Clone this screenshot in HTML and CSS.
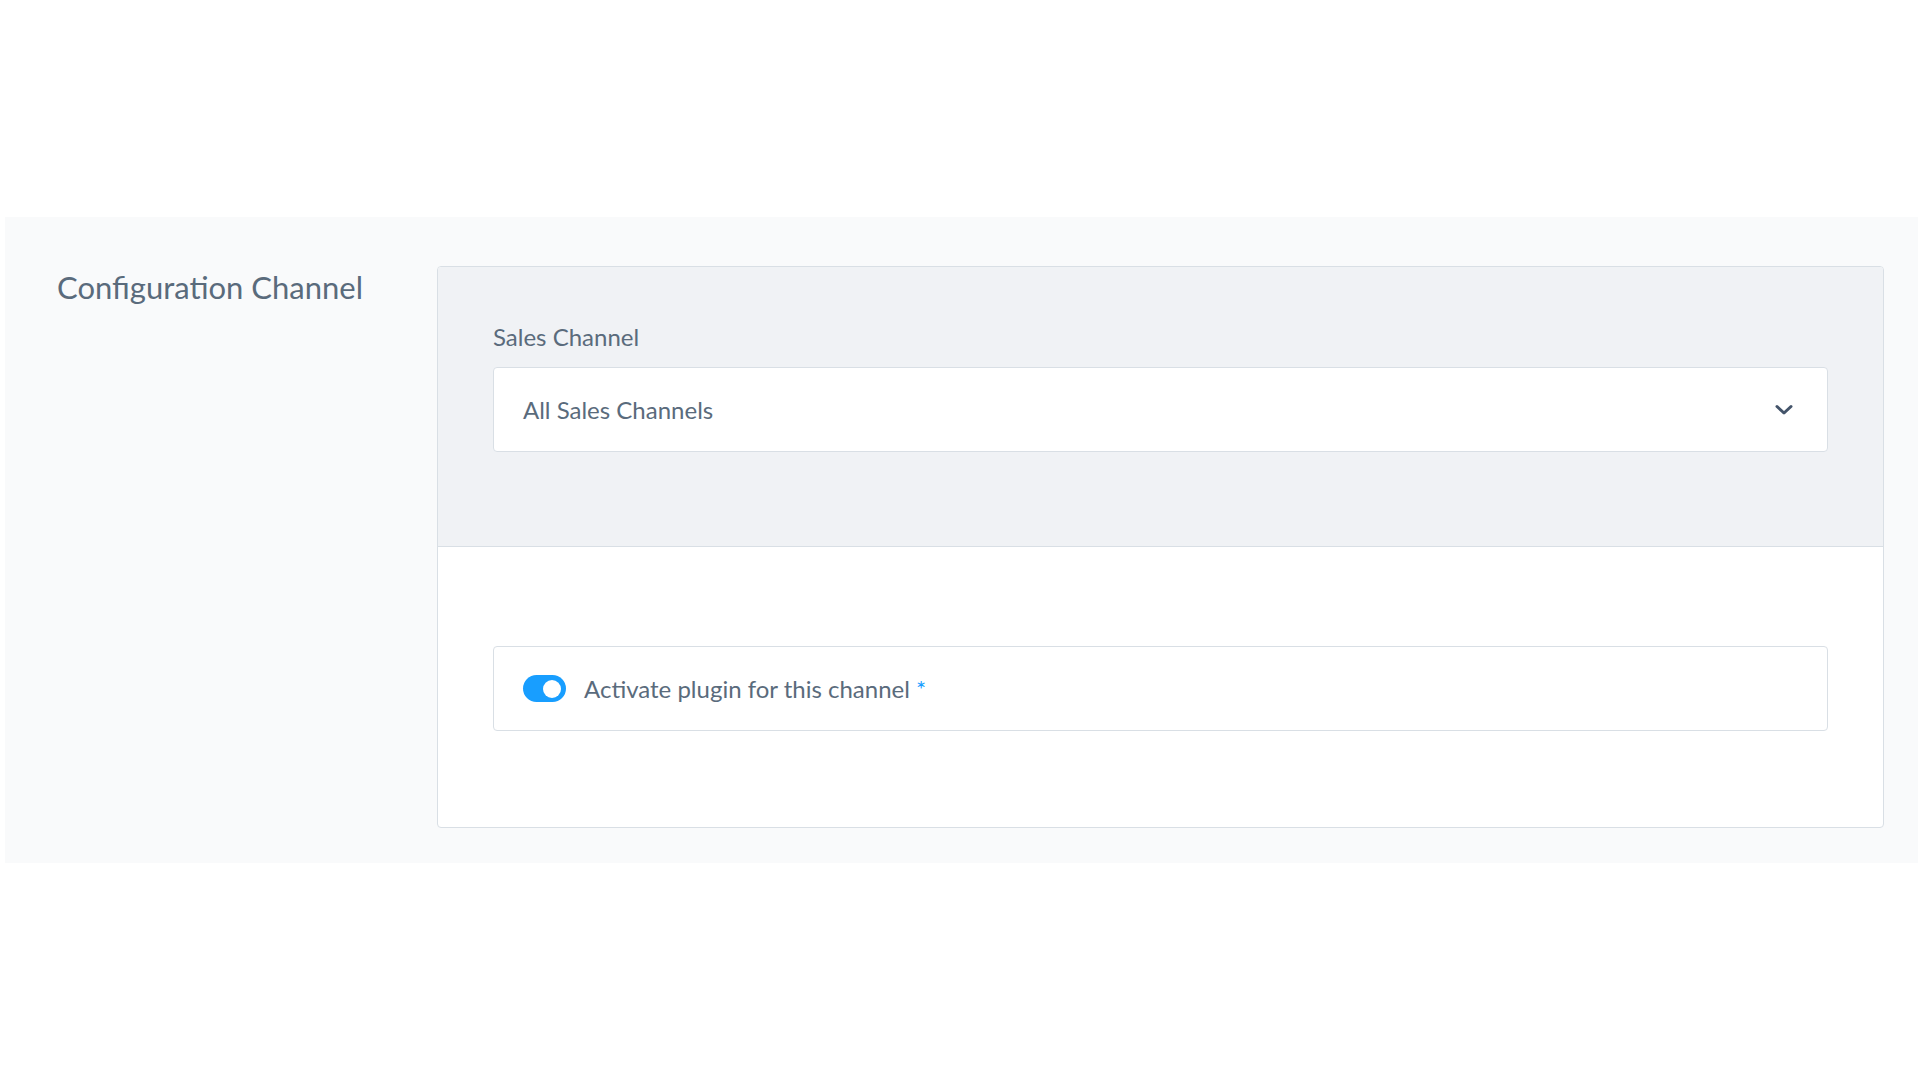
FILE: index.html
```html
<!DOCTYPE html>
<html lang="en">
<head>
<meta charset="utf-8">
<title>Configuration Channel</title>
<link rel="stylesheet" href="styles.css">
</head>
<body>
<div class="page">
  <section class="config">
    <div class="config-side">
      <h2 class="config-title">Configuration Channel</h2>
    </div>
    <div class="card">
      <div class="card-header">
        <label class="field-label">Sales Channel</label>
        <div class="select">
          <span class="select-value">All Sales Channels</span>
          <svg class="chevron" width="18" height="12" viewBox="0 0 18 12" aria-hidden="true">
            <path d="M2 2.5 L9 9 L16 2.5" fill="none" stroke="#44546a" stroke-width="3" stroke-linecap="round" stroke-linejoin="round"/>
          </svg>
        </div>
      </div>
      <div class="card-body">
        <div class="switch-field">
          <span class="switch"><span class="switch-knob"></span></span>
          <span class="switch-label">Activate plugin for this channel <span class="required">*</span></span>
        </div>
      </div>
    </div>
  </section>
</div>
</body>
</html>
```
FILE: styles.css
```css
html, body {
  margin: 0;
  padding: 0;
  background: #ffffff;
}

body {
  font-family: "Lato", "Liberation Sans", sans-serif;
  color: #5a6b7c;
}

.page {
  padding-top: 217px;
  padding-left: 5px;
  width: 1913px;
}

.config {
  display: grid;
  grid-template-columns: 432px 1fr;
  height: 646px;
  box-sizing: border-box;
  padding: 49px 34px 35px 0;
  background: #f9fafb;
}

.config-side {
  padding-left: 52px;
}

.config-title {
  margin: 0;
  padding-top: 1px;
  font-size: 31px;
  font-weight: 400;
  line-height: 40px;
  color: #5a6b7c;
}

.card {
  display: flex;
  flex-direction: column;
  border: 1px solid #d9dfe5;
  border-radius: 4px;
  background: #ffffff;
  overflow: hidden;
}

.card-header {
  display: flex;
  flex-direction: column;
  height: 280px;
  box-sizing: border-box;
  padding: 54px 55px 0 55px;
  background: #f0f2f5;
  border-bottom: 1px solid #d9dfe5;
}

.field-label {
  font-size: 24px;
  line-height: 32px;
  margin-bottom: 14px;
  color: #5a6b7c;
}

.select {
  display: flex;
  align-items: center;
  justify-content: space-between;
  height: 85px;
  box-sizing: border-box;
  padding: 0 34px 0 29px;
  background: #ffffff;
  border: 1px solid #d9dfe5;
  border-radius: 4px;
}

.select-value {
  font-size: 24px;
  color: #5a6b7c;
}

.chevron {
  display: block;
}

.card-body {
  flex: 1;
  display: flex;
  flex-direction: column;
  padding: 99px 55px 0 55px;
}

.switch-field {
  display: flex;
  align-items: center;
  height: 85px;
  box-sizing: border-box;
  padding-left: 29px;
  border: 1px solid #d9dfe5;
  border-radius: 4px;
  background: #ffffff;
}

.switch {
  display: flex;
  align-items: center;
  justify-content: flex-end;
  width: 43px;
  height: 27px;
  box-sizing: border-box;
  padding-right: 5px;
  border-radius: 14px;
  background: #189eff;
  margin-right: 18px;
}

.switch-knob {
  width: 18px;
  height: 18px;
  border-radius: 50%;
  background: #ffffff;
}

.switch-label {
  font-size: 24px;
  color: #5a6b7c;
}

.required {
  color: #189eff;
  font-size: 24px;
  vertical-align: 0;
}
```
